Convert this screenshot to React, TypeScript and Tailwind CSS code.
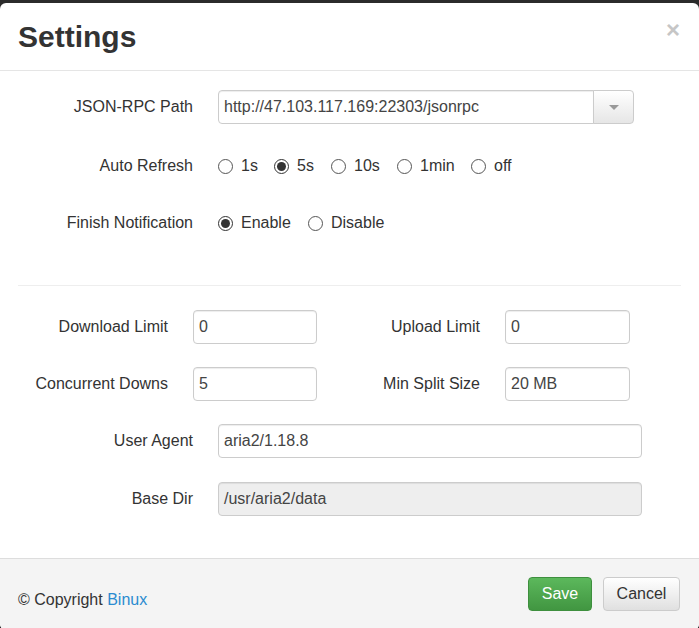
import React from 'react'

const font = { fontFamily: '"Liberation Sans", Arial, Helvetica, sans-serif' }

function Radio({ checked, label }: { checked?: boolean; label: string }) {
  return (
    <label className="flex items-center">
      <span
        className={`flex h-[15px] w-[15px] items-center justify-center rounded-full border bg-white ${
          checked ? 'border-[#333]' : 'border-[#555]'
        }`}
      >
        {checked && <span className="h-[9px] w-[9px] rounded-full bg-[#333]" />}
      </span>
      <span className="ml-[8px] text-[16px] text-[#333]">{label}</span>
    </label>
  )
}

function TextInput({
  value,
  width,
  disabled,
}: {
  value: string
  width: string
  disabled?: boolean
}) {
  return (
    <div
      className={`flex h-[34px] items-center rounded-[4px] border border-[#ccc] pl-[5px] text-[16px] text-[#444] shadow-[inset_0_1px_1px_rgba(0,0,0,0.075)] ${width} ${
        disabled ? 'bg-[#eee]' : 'bg-white'
      }`}
    >
      {value}
    </div>
  )
}

export default function App() {
  return (
    <div className="h-[628px] w-[699px] overflow-hidden bg-[#2b2b2b] pt-[3px]" style={font}>
      <div className="overflow-hidden rounded-[6px] bg-white">
        {/* header */}
        <div className="relative flex h-[68px] items-center border-b border-[#e5e5e5] pl-[18px]">
          <h4 className="text-[30px] font-bold leading-none text-[#333]">Settings</h4>
          <button className="absolute right-[19px] top-[15px] text-[24px] font-bold leading-none text-[#c6c6c6]">
            ×
          </button>
        </div>

        {/* body */}
        <div className="h-[487px] pt-[19px] text-[16px] text-[#333]">
          <div className="flex h-[34px] items-center">
            <div className="w-[193px] text-right">JSON-RPC Path</div>
            <div className="ml-[25px] flex">
              <TextInput value="http://47.103.117.169:22303/jsonrpc" width="w-[376px] rounded-r-none" />
              <button className="-ml-px flex h-[34px] w-[41px] items-center justify-center rounded-r-[4px] border border-[#ccc] bg-gradient-to-b from-white to-[#e6e6e6]">
                <span className="h-0 w-0 border-x-[5px] border-t-[5px] border-x-transparent border-t-[#999]" />
              </button>
            </div>
          </div>

          <div className="mt-[25px] flex h-[34px] items-center">
            <div className="w-[193px] text-right">Auto Refresh</div>
            <div className="ml-[25px] flex items-center">
              <div className="w-[56px]">
                <Radio label="1s" />
              </div>
              <div className="w-[57px]">
                <Radio label="5s" checked />
              </div>
              <div className="w-[66px]">
                <Radio label="10s" />
              </div>
              <div className="w-[74px]">
                <Radio label="1min" />
              </div>
              <Radio label="off" />
            </div>
          </div>

          <div className="mt-[23px] flex h-[34px] items-center">
            <div className="w-[193px] text-right">Finish Notification</div>
            <div className="ml-[25px] flex items-center">
              <div className="w-[90px]">
                <Radio label="Enable" checked />
              </div>
              <Radio label="Disable" />
            </div>
          </div>

          <hr className="mx-[18px] mt-[45px] border-t border-[#eee]" />

          <div className="mt-[24px] flex h-[34px] items-center">
            <div className="w-[168px] text-right">Download Limit</div>
            <div className="ml-[25px]">
              <TextInput value="0" width="w-[124px]" />
            </div>
            <div className="w-[163px] text-right">Upload Limit</div>
            <div className="ml-[25px]">
              <TextInput value="0" width="w-[125px]" />
            </div>
          </div>

          <div className="mt-[23px] flex h-[34px] items-center">
            <div className="w-[168px] text-right">Concurrent Downs</div>
            <div className="ml-[25px]">
              <TextInput value="5" width="w-[124px]" />
            </div>
            <div className="w-[163px] text-right">Min Split Size</div>
            <div className="ml-[25px]">
              <TextInput value="20 MB" width="w-[125px]" />
            </div>
          </div>

          <div className="mt-[23px] flex h-[34px] items-center">
            <div className="w-[193px] text-right">User Agent</div>
            <div className="ml-[25px]">
              <TextInput value="aria2/1.18.8" width="w-[424px]" />
            </div>
          </div>

          <div className="mt-[24px] flex h-[34px] items-center">
            <div className="w-[193px] text-right">Base Dir</div>
            <div className="ml-[25px]">
              <TextInput value="/usr/aria2/data" width="w-[424px]" disabled />
            </div>
          </div>
        </div>

        {/* footer */}
        <div className="flex h-[72px] items-start justify-between border-t border-[#ddd] bg-[#f4f4f4] pl-[18px] pr-[19px] pt-[18px]">
          <div className="mt-[11px] text-[16px] text-[#333]">
            © Copyright <a className="text-[#2a8bd0]">Binux</a>
          </div>
          <div className="flex gap-[11px]">
            <button className="h-[34px] w-[64px] rounded-[4px] border border-[#3e8f3e] bg-gradient-to-b from-[#5cb85c] to-[#419641] text-[16px] text-white">
              Save
            </button>
            <button className="h-[34px] w-[77px] rounded-[4px] border border-[#ccc] bg-gradient-to-b from-white to-[#e0e0e0] text-[16px] text-[#333]">
              Cancel
            </button>
          </div>
        </div>
      </div>
    </div>
  )
}
